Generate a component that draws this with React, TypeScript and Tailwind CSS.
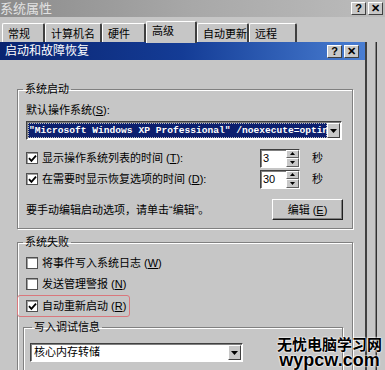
import React from 'react';

const FONT = { fontFamily: '"Liberation Sans", "Noto Sans CJK SC", sans-serif' };

const tabs = [
  { label: '常规', w: 'w-[43px]' },
  { label: '计算机名', w: 'w-[57px]' },
  { label: '硬件', w: 'w-[44px]' },
  { label: '高级', w: 'w-[51px]', active: true },
  { label: '自动更新', w: 'w-[52px]' },
  { label: '远程', w: 'w-[48px]' },
];

const TitleButton = ({ glyph }: { glyph: string }) => (
  <div className="w-[15px] h-[13px] bg-[#c8c8c8] border border-t-white border-l-white border-b-[#404040] border-r-[#404040] flex items-center justify-center text-[11px] font-bold leading-none text-black">
    {glyph}
  </div>
);

const Mnemonic = ({ k, colon }: { k: string; colon?: boolean }) => (
  <span className="ml-[3px]">
    (<span className="underline">{k}</span>){colon ? ':' : ''}
  </span>
);

const CheckBox = ({ checked }: { checked?: boolean }) => (
  <div className="w-[12px] h-[12px] shrink-0 bg-white border border-[#505050] shadow-[inset_1px_1px_0_#a0a0a0] flex items-center justify-center">
    {checked && (
      <svg width="9" height="9" viewBox="0 0 9 9">
        <path d="M1 4.2 L3.4 6.8 L8 1.6" fill="none" stroke="#000" strokeWidth="1.8" />
      </svg>
    )}
  </div>
);

const DownArrow = () => (
  <div className="w-[13px] h-full bg-[#c8c8c8] border border-t-white border-l-white border-b-[#404040] border-r-[#404040] flex items-center justify-center">
    <svg width="7" height="4" viewBox="0 0 7 4">
      <path d="M0 0 H7 L3.5 4 Z" fill="#000" />
    </svg>
  </div>
);

const Spinner = ({ value }: { value: string }) => (
  <div className="w-[40px] h-[19px] bg-white border border-t-[#404040] border-l-[#404040] border-b-white border-r-white shadow-[inset_1px_1px_0_#808080] flex">
    <span className="flex-1 pl-[2px] text-[11px] leading-[17px] text-black">{value}</span>
    <div className="w-[13px] flex flex-col">
      {[0, 1].map((i) => (
        <div
          key={i}
          className="flex-1 bg-[#c8c8c8] border border-t-white border-l-white border-b-[#606060] border-r-[#606060] flex items-center justify-center">
          <svg width="5" height="3" viewBox="0 0 5 3">
            <path d={i === 0 ? 'M0 3 H5 L2.5 0 Z' : 'M0 0 H5 L2.5 3 Z'} fill="#000" />
          </svg>
        </div>
      ))}
    </div>
  </div>
);

const groupCls =
  'border border-[#808080] shadow-[1px_1px_0_#fff,inset_1px_1px_0_#fff] min-w-0';

export default function App() {
  return (
    <div
      className="w-[385px] h-[370px] overflow-hidden bg-[#c6c6c6] flex flex-col relative text-black"
      style={FONT}>
      {/* parent title bar */}
      <div className="h-[17px] shrink-0 bg-gradient-to-r from-[#8c8c8c] via-[#a8a8a8] to-[#bcbcbc] flex items-center pr-[2px]">
        <span className="text-[13px] leading-none text-[#e2e2e2]">系统属性</span>
        <div className="ml-auto flex gap-[2px]">
          <TitleButton glyph="?" />
          <TitleButton glyph="✕" />
        </div>
      </div>

      {/* tabs */}
      <div className="h-[25px] shrink-0 flex items-end pl-[2px]">
        {tabs.map((t) => (
          <div
            key={t.label}
            className={`${t.w} ${
              t.active ? 'h-[22px] -mb-[1px] pt-[4px] bg-[#c6c6c6] relative z-10' : 'h-[19px] pt-[5px]'
            } border-t border-l border-t-white border-l-white border-r-2 border-r-[#404040] rounded-t-[2px] pl-[5px] text-[11px] leading-none whitespace-nowrap`}>
            {t.label}
          </div>
        ))}
      </div>

      <div className="flex flex-1 min-h-0">
        {/* child dialog */}
        <div className="w-[367px] shrink-0 flex flex-col border-r-2 border-r-[#404040]">
          <div className="h-[18px] shrink-0 bg-gradient-to-r from-[#0a2470] via-[#143c96] to-[#4a7ed2] flex items-center pl-[5px] pr-[6px]">
            <span className="text-[12px] leading-none text-white">启动和故障恢复</span>
            <div className="ml-auto flex gap-[2px]">
              <TitleButton glyph="?" />
              <TitleButton glyph="✕" />
            </div>
          </div>

          <div className="flex-1 flex flex-col text-[11px] leading-[12px]">
            {/* 系统启动 */}
            <fieldset className={`${groupCls} mt-[23px] ml-[17px] w-[336px] px-[8px] pt-[9px] pb-[8px]`}>
              <legend className="-ml-[3px] px-[2px] leading-[12px]">系统启动</legend>
              <div>
                默认操作系统
                <span>
                  (<span className="underline">S</span>):
                </span>
              </div>
              <div className="mt-[5px] w-[316px] h-[19px] bg-white border border-t-[#404040] border-l-[#404040] border-b-white border-r-white shadow-[inset_1px_1px_0_#808080] flex p-[1px]">
                <div className="flex-1 min-w-0 overflow-hidden whitespace-nowrap bg-[#0c1f6e] outline-dotted outline-1 outline-[#c0c0c0] -outline-offset-1 pl-[1px]">
                  <span
                    className="text-white text-[9.6px] leading-[15px] font-bold"
                    style={{ fontFamily: '"Liberation Mono", "Courier New", monospace' }}>
                    "Microsoft Windows XP Professional" /noexecute=optin
                  </span>
                </div>
                <DownArrow />
              </div>

              <div className="mt-[8px] flex items-center h-[20px]">
                <div className="w-[234px] flex items-center">
                  <CheckBox checked />
                  <span className="ml-[4px]">
                    显示操作系统列表的时间
                    <Mnemonic k="T" colon />
                  </span>
                </div>
                <Spinner value="3" />
                <span className="ml-[12px]">秒</span>
              </div>
              <div className="mt-[1px] flex items-center h-[20px]">
                <div className="w-[234px] flex items-center">
                  <CheckBox checked />
                  <span className="ml-[4px]">
                    在需要时显示恢复选项的时间
                    <Mnemonic k="D" colon />
                  </span>
                </div>
                <Spinner value="30" />
                <span className="ml-[12px]">秒</span>
              </div>

              <div className="mt-[10px] flex items-center">
                <span>要手动编辑启动选项，请单击“编辑”。</span>
                <button className="ml-auto mr-[1px] w-[71px] h-[21px] bg-[#c6c6c6] border border-t-white border-l-white border-b-[#202020] border-r-[#202020] shadow-[inset_-1px_-1px_0_#808080] text-[11px]">
                  编辑
                  <Mnemonic k="E" />
                </button>
              </div>
            </fieldset>

            {/* 系统失败 */}
            <fieldset className={`${groupCls} mt-[7px] ml-[17px] w-[336px] px-[8px] pt-[8px] pb-[20px]`}>
              <legend className="-ml-[3px] px-[2px] leading-[12px]">系统失败</legend>
              <div className="flex flex-col gap-[7px]">
                <div className="flex items-center h-[14px]">
                  <CheckBox />
                  <span className="ml-[4px]">
                    将事件写入系统日志
                    <Mnemonic k="W" />
                  </span>
                </div>
                <div className="flex items-center h-[14px]">
                  <CheckBox />
                  <span className="ml-[4px]">
                    发送管理警报
                    <Mnemonic k="N" />
                  </span>
                </div>
                <div className="mt-[1px] flex items-center h-[14px] relative self-start">
                  <CheckBox checked />
                  <span className="ml-[4px]">
                    自动重新启动
                    <Mnemonic k="R" />
                  </span>
                  <span className="absolute -left-[9px] -right-[4px] -top-[4px] -bottom-[4px] border-[1.5px] border-[#d9777c] rounded-[3px] pointer-events-none" />
                </div>
              </div>

              <fieldset className={`${groupCls} mt-[8px] -ml-[3px] w-[320px] px-[6px] pt-[10px] pb-[10px]`}>
                <legend className="ml-[2px] px-[2px] leading-[12px]">写入调试信息</legend>
                <div className="w-[213px] h-[19px] bg-white border border-t-[#404040] border-l-[#404040] border-b-white border-r-white shadow-[inset_1px_1px_0_#808080] flex p-[1px]">
                  <span className="flex-1 pl-[2px] leading-[15px]">核心内存转储</span>
                  <DownArrow />
                </div>
              </fieldset>
            </fieldset>
          </div>
        </div>

        {/* parent tab panel edge */}
        <div className="flex-1 flex">
          <div className="w-[9px] border-r border-r-[#808080]" />
          <div className="w-[1px] bg-[#303030]" />
        </div>
      </div>

      {/* watermark */}
      <div className="absolute right-[3px] bottom-[1px] flex flex-col items-center font-bold leading-none [text-shadow:0_0_2px_#fff,0_0_2px_#fff,0_0_1px_#fff]">
        <span className="text-[15px]" style={{ fontFamily: '"Noto Sans CJK SC", sans-serif' }}>
          无忧电脑学习网
        </span>
        <span className="text-[18px]" style={{ fontFamily: '"Liberation Sans", sans-serif' }}>
          wypcw.com
        </span>
      </div>
    </div>
  );
}
